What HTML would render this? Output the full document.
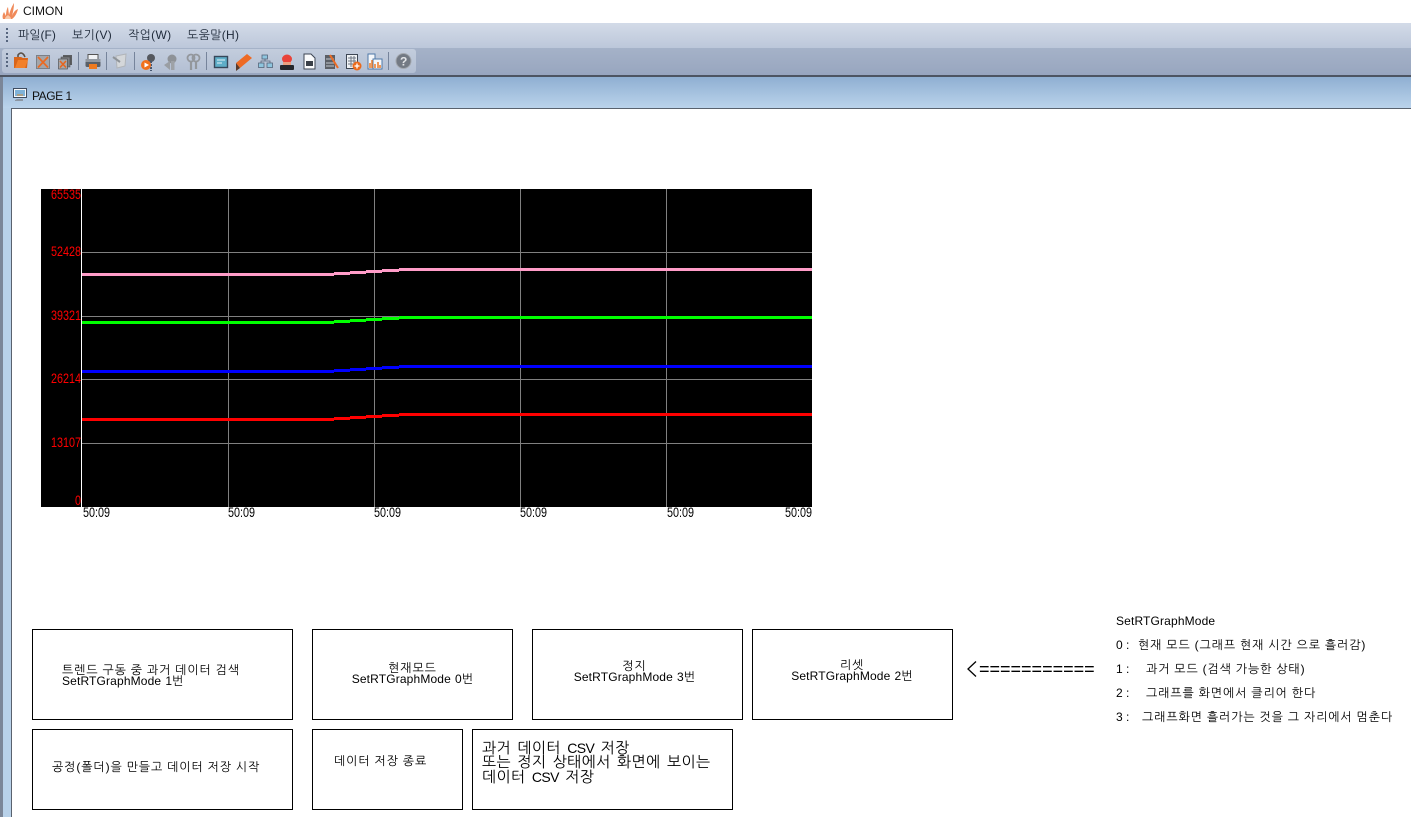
<!DOCTYPE html>
<html lang="ko"><head><meta charset="utf-8"><title>CIMON</title>
<style>
html,body{margin:0;padding:0;background:#fff}
body{width:1411px;height:817px;position:relative;overflow:hidden;font-family:"Liberation Sans","NanumGothic","Noto Sans CJK KR",sans-serif;font-size:12px;color:#000}
.a{position:absolute;white-space:nowrap}
.box{position:absolute;box-sizing:border-box;border:1px solid #000;background:#fff}
.t{position:absolute;white-space:nowrap;line-height:11px;font-size:12px;letter-spacing:.15px;word-spacing:.6px;font-family:"Liberation Sans","WenQuanYi Zen Hei","NanumGothic",sans-serif}
.c{text-align:center}
.m{position:absolute;top:28px;font-size:12px;line-height:14px;color:#1f2a3a;white-space:nowrap;letter-spacing:.3px}
.r{position:absolute;left:1116px;font-size:12px;line-height:14px;white-space:nowrap;letter-spacing:.15px;word-spacing:.6px;font-family:"Liberation Sans","WenQuanYi Zen Hei","NanumGothic",sans-serif}
.r span{display:inline-block;letter-spacing:.15px}
.k,.t.k,.r.k{letter-spacing:.9px;word-spacing:-.3px}
svg{position:absolute;overflow:visible}
text{font-family:"Liberation Sans",sans-serif}
</style></head><body>

<!-- title bar -->
<svg style="left:2px;top:3px" width="17" height="17" viewBox="0 0 17 17">
<path d="M1 16C0 13 1 11 2 9L4 13C4 9 5 5 6 4L7 12C8 8 10 3 12 0C12 5 11 9 10 13C11 10 13 7 16 6C15 10 13 14 10 16Z" fill="#f08a5a"/>
<path d="M3 16C3 14 5 13 6 12C7 13 9 14 9 16Z" fill="#f9c8a8"/>
</svg>
<div class="a" style="left:23px;top:4px;font-size:12px;line-height:15px;color:#111">CIMON</div>

<!-- menu bar -->
<div class="a" style="left:0;top:23px;width:1411px;height:25px;background:linear-gradient(#d3dbe8,#bcc7da)"></div>
<div class="a" style="left:6px;top:28px;width:2px;height:14px;background:repeating-linear-gradient(#56657e 0 2px,transparent 2px 4px)"></div>
<div class="m" style="left:18px;letter-spacing:0">파일(F)</div>
<div class="m" style="left:72px">보기(V)</div>
<div class="m" style="left:128px">작업(W)</div>
<div class="m" style="left:187px">도움말(H)</div>

<!-- toolbar band -->
<div class="a" style="left:0;top:48px;width:1411px;height:27px;background:linear-gradient(#a5b2c8,#98a6bf)"></div>
<div class="a" style="left:2px;top:49px;width:414px;height:24px;background:linear-gradient(#c3cddd,#b3bfd3);border-radius:3px"></div>
<div class="a" style="left:6px;top:53px;width:2px;height:14px;background:repeating-linear-gradient(#56657e 0 2px,transparent 2px 4px)"></div>
<div class="a" style="left:78px;top:52px;width:1px;height:18px;background:#76849b"></div>
<div class="a" style="left:106px;top:52px;width:1px;height:18px;background:#76849b"></div>
<div class="a" style="left:134px;top:52px;width:1px;height:18px;background:#76849b"></div>
<div class="a" style="left:206px;top:52px;width:1px;height:18px;background:#76849b"></div>
<div class="a" style="left:388px;top:52px;width:1px;height:18px;background:#76849b"></div>

<svg style="left:0;top:48px" width="420" height="27" viewBox="0 0 420 27">
<!-- open folder -->
<path d="M18 9V7Q21 3 24 7L25 9" fill="none" stroke="#5a5148" stroke-width="1.600"/>
<path d="M14 9H21L23 10H28L27 20H14Z" fill="#d9651a"/><path d="M15 20L18 12H28L25 20Z" fill="#f2802a"/>
<!-- x box -->
<rect x="36.500" y="7.500" width="13" height="13" fill="#a3a6ab" stroke="#7b8088"/><path d="M38 9L48 19.500M48 9L38 19.500" stroke="#ec6a22" stroke-width="1.700"/>
<!-- stacked x -->
<rect x="63" y="7" width="9" height="10" fill="#5c5e61"/><rect x="61" y="9" width="9" height="10" fill="#7d7f83" stroke="#444" stroke-width=".5"/><rect x="58.500" y="11" width="9" height="10" fill="#a6a8ab" stroke="#444" stroke-width=".6"/><path d="M60 13L66 19.500M66 13L60 19.500" stroke="#e8641c" stroke-width="1.500"/>
<!-- printer -->
<rect x="88" y="6.500" width="10" height="6" fill="#f0f2f5" stroke="#555"/><rect x="85.500" y="11" width="15" height="8" rx="1.500" fill="#5a6068"/><rect x="85.500" y="11" width="15" height="3" fill="#9298a0"/><rect x="89" y="16" width="8" height="5" fill="#ef7a1f"/>
<!-- note disabled -->
<path d="M116 8L126 6L125 18L117 20Z" fill="#d4d7da" stroke="#b0b4b9"/><path d="M113 9L120 14" stroke="#8f9499" stroke-width="2"/>
<!-- key play -->
<circle cx="151" cy="10" r="4" fill="#55585e"/><path d="M151 13V23" stroke="#45556e" stroke-width="2" stroke-dasharray="2 1"/><circle cx="146" cy="17" r="5" fill="#f0701c"/><path d="M144.500 14.500L149 17L144.500 19.500Z" fill="#fff"/>
<!-- key disabled -->
<circle cx="172" cy="11" r="4.500" fill="#8e9297"/><rect x="171" y="13" width="3.500" height="9" fill="#9ea2a7"/><path d="M164 17L170 13V22Z" fill="#9a9ea3"/>
<!-- keys disabled -->
<circle cx="191" cy="10" r="3.500" fill="none" stroke="#93979c" stroke-width="1.800"/><circle cx="196" cy="10" r="3.500" fill="none" stroke="#93979c" stroke-width="1.800"/><path d="M191 13V22M196 13V21" stroke="#93979c" stroke-width="2.200"/>
<!-- screen -->
<rect x="214.500" y="8.500" width="13" height="11" fill="#5faec8" stroke="#37475a" stroke-width="1.400"/><path d="M217 12H225M217 15H222" stroke="#e3f1f7"/>
<!-- marker -->
<path d="M236 15L247 6L252 10L240 20Z" fill="#ee6a24"/><path d="M236 15L240 20L236 23Z" fill="#5a3a2a"/>
<!-- network -->
<rect x="262" y="7" width="5.500" height="4" fill="#8ec5de" stroke="#55657a" stroke-width=".8"/><rect x="258.500" y="15" width="5.500" height="4.500" fill="#8ec5de" stroke="#55657a" stroke-width=".8"/><rect x="267" y="15" width="5.500" height="4.500" fill="#8ec5de" stroke="#55657a" stroke-width=".8"/><path d="M265 11V13H261V15M265 13H270V15" fill="none" stroke="#55657a" stroke-width=".8"/>
<!-- alarm -->
<ellipse cx="287" cy="11" rx="5" ry="4.500" fill="#e9433a"/><rect x="283" y="14" width="8" height="3" fill="#e9a080"/><rect x="280" y="17" width="14" height="5" rx="1" fill="#24272c"/>
<!-- doc -->
<path d="M304 6H311L315 10V21H304Z" fill="#fafbfc" stroke="#3d4653"/><rect x="306" y="13" width="7" height="5" fill="#3a4048"/>
<!-- tool -->
<rect x="325" y="7" width="10" height="14" fill="#5b5f66"/><path d="M326 11H334M326 15H334M326 18H334" stroke="#c2c7cf"/><path d="M330 7L338 20" stroke="#ea6b24" stroke-width="2"/>
<!-- calc -->
<rect x="346.500" y="6.500" width="11" height="14" fill="#eef1f4" stroke="#3d4653"/><path d="M348 10H356M348 13H356M348 16H353M351 8V19M354 8V16" stroke="#6f7884"/><circle cx="357" cy="18" r="4.500" fill="#ea6a1c"/><path d="M354.500 18H359.500M357 15.500V20.500" stroke="#fff" stroke-width="1.300"/>
<!-- chart doc -->
<path d="M368 6H375V21H368Z" fill="#f5f7fa" stroke="#4e78a8"/><rect x="373" y="11" width="9" height="10" fill="#f5f7fa" stroke="#4e78a8"/><path d="M370 20V15M372 20V12M375 20V16M378 20V14M380 20V17" stroke="#ec7a28" stroke-width="1.500"/>
<!-- help -->
<circle cx="403.500" cy="13" r="7.500" fill="#737a84"/><circle cx="403.500" cy="13" r="7.500" fill="none" stroke="#a3a8af"/>
<text x="400" y="17.500" font-size="12" font-weight="bold" fill="#e4e6e9">?</text>
</svg>

<!-- mdi frame -->
<div class="a" style="left:0;top:75px;width:1411px;height:2px;background:#4d5562"></div>
<div class="a" style="left:0;top:77px;width:3px;height:740px;background:#7b8698"></div>
<div class="a" style="left:3px;top:77px;width:1408px;height:31px;background:linear-gradient(#8fafd2,#bad3eb)"></div>
<div class="a" style="left:3px;top:108px;width:8px;height:709px;background:#b8d1e9"></div>
<div class="a" style="left:11px;top:108px;width:1400px;height:1px;background:#59626e"></div>
<div class="a" style="left:11px;top:108px;width:1px;height:709px;background:#59626e"></div>
<svg style="left:13px;top:88px" width="14" height="14" viewBox="0 0 14 14">
<rect x=".500" y=".500" width="13" height="9" fill="#f6f8fa" stroke="#3e4c60"/><rect x="2" y="2" width="10" height="6" fill="#7fb2d8"/><path d="M4 7H10" stroke="#d48a30"/><path d="M4 11H10V13H2V12Z" fill="#8c96a2"/>
</svg>
<div class="a" style="left:32px;top:89px;font-size:12px;line-height:15px;color:#111;letter-spacing:-.45px">PAGE 1</div>

<!-- chart -->
<svg style="left:0;top:0" width="1411" height="530" viewBox="0 0 1411 530" shape-rendering="crispEdges">
<rect x="41" y="189" width="771" height="318" fill="#000"/>
<g fill="#808080">
<rect x="82" y="252" width="730" height="1"/><rect x="82" y="316" width="730" height="1"/><rect x="82" y="379" width="730" height="1"/><rect x="82" y="443" width="730" height="1"/>
<rect x="228" y="189" width="1" height="318"/><rect x="374" y="189" width="1" height="318"/><rect x="520" y="189" width="1" height="318"/><rect x="666" y="189" width="1" height="318"/>
</g>
<rect x="81" y="189" width="1" height="318" fill="#fff"/>
<g fill="#ff9cc8"><rect x="82" y="273" width="252" height="3"/><rect x="334" y="272" width="16" height="3"/><rect x="350" y="271" width="16" height="3"/><rect x="366" y="270" width="16" height="3"/><rect x="382" y="269" width="17" height="3"/><rect x="399" y="268" width="413" height="3"/></g>
<g fill="#00ff00"><rect x="82" y="321" width="252" height="3"/><rect x="334" y="320" width="16" height="3"/><rect x="350" y="319" width="16" height="3"/><rect x="366" y="318" width="16" height="3"/><rect x="382" y="317" width="17" height="3"/><rect x="399" y="316" width="413" height="3"/></g>
<g fill="#0000ff"><rect x="82" y="370" width="252" height="3"/><rect x="334" y="369" width="16" height="3"/><rect x="350" y="368" width="16" height="3"/><rect x="366" y="367" width="16" height="3"/><rect x="382" y="366" width="17" height="3"/><rect x="399" y="365" width="413" height="3"/></g>
<g fill="#ff0000"><rect x="82" y="418" width="252" height="3"/><rect x="334" y="417" width="16" height="3"/><rect x="350" y="416" width="16" height="3"/><rect x="366" y="415" width="16" height="3"/><rect x="382" y="414" width="17" height="3"/><rect x="399" y="413" width="413" height="3"/></g>
<g fill="#ff0000" font-size="14" text-anchor="end" shape-rendering="auto">
<text x="81" y="199" textLength="30" lengthAdjust="spacingAndGlyphs">65535</text>
<text x="81" y="256" textLength="30" lengthAdjust="spacingAndGlyphs">52428</text>
<text x="81" y="320" textLength="30" lengthAdjust="spacingAndGlyphs">39321</text>
<text x="81" y="383" textLength="30" lengthAdjust="spacingAndGlyphs">26214</text>
<text x="81" y="447" textLength="30" lengthAdjust="spacingAndGlyphs">13107</text>
<text x="81" y="505" textLength="6" lengthAdjust="spacingAndGlyphs">0</text>
</g>
<g fill="#000" font-size="14" shape-rendering="auto">
<text x="83" y="517" textLength="27" lengthAdjust="spacingAndGlyphs">50:09</text>
<text x="228" y="517" textLength="27" lengthAdjust="spacingAndGlyphs">50:09</text>
<text x="374" y="517" textLength="27" lengthAdjust="spacingAndGlyphs">50:09</text>
<text x="520" y="517" textLength="27" lengthAdjust="spacingAndGlyphs">50:09</text>
<text x="667" y="517" textLength="27" lengthAdjust="spacingAndGlyphs">50:09</text>
<text x="785" y="517" textLength="27" lengthAdjust="spacingAndGlyphs">50:09</text>
</g>
</svg>

<!-- buttons -->
<div class="box" style="left:32px;top:629px;width:261px;height:91px"></div>
<div class="box" style="left:312px;top:629px;width:201px;height:91px"></div>
<div class="box" style="left:532px;top:629px;width:211px;height:91px"></div>
<div class="box" style="left:752px;top:629px;width:201px;height:91px"></div>
<div class="box" style="left:32px;top:729px;width:261px;height:81px"></div>
<div class="box" style="left:312px;top:729px;width:151px;height:81px"></div>
<div class="box" style="left:472px;top:729px;width:261px;height:81px"></div>

<div class="t" style="left:62px;top:665px"><span class="k">트렌드 구동 중 과거 데이터 검색</span><br>SetRTGraphMode 1번</div>
<div class="t c" style="left:312px;width:201px;top:663px"><span class="k">현재모드</span><br>SetRTGraphMode 0번</div>
<div class="t c" style="left:532px;width:205px;top:661px"><span class="k">정지</span><br>SetRTGraphMode 3번</div>
<div class="t c" style="left:752px;width:200px;top:660px"><span class="k">리셋</span><br>SetRTGraphMode 2번</div>
<div class="t k" style="left:52px;top:762px">공정(폴더)을 만들고 데이터 저장 시작</div>
<div class="t k" style="left:334px;top:756px">데이터 저장 종료</div>
<div class="t" style="left:482px;top:741px;font-size:15px;line-height:14px;letter-spacing:.4px;word-spacing:1.800px">과거 데이터 <span style="font-size:14px;letter-spacing:-.6px">CSV</span> 저장<br>또는 정지 상태에서 화면에 보이는<br>데이터 <span style="font-size:14px;letter-spacing:-.6px">CSV</span> 저장</div>

<!-- arrow and notes -->
<svg style="left:966px;top:660px" width="14" height="18" viewBox="0 0 14 18"><path d="M10 1.500L2 9L10 16.500" fill="none" stroke="#000" stroke-width="1.300"/></svg>
<div class="a" style="left:979px;top:660px;width:117px;font-size:18px;line-height:18px;overflow:hidden">===========</div>
<div class="r" style="top:614px">SetRTGraphMode</div>
<div class="r k" style="top:638px"><span style="width:22px">0 :</span>현재 모드 (그래프 현재 시간 으로 흘러감)</div>
<div class="r k" style="top:662px"><span style="width:30px">1 :</span>과거 모드 (검색 가능한 상태)</div>
<div class="r k" style="top:686px"><span style="width:30px">2 :</span>그래프를 화면에서 클리어 한다</div>
<div class="r k" style="top:710px"><span style="width:26px">3 :</span>그래프화면 흘러가는 것을 그 자리에서 멈춘다</div>

</body></html>
